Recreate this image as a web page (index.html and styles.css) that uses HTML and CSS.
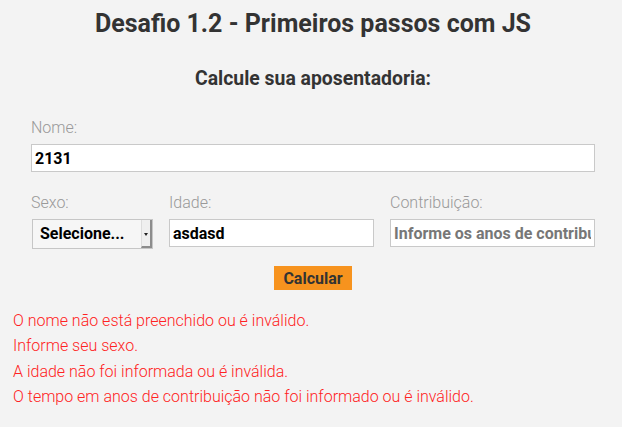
FILE: index.html
```html
<!DOCTYPE html>
<html lang="pt-BR">
<head>
<meta charset="utf-8">
<title>Desafio 1.2</title>
<link rel="stylesheet" href="styles.css">
</head>
<body>
<div class="page">
  <h1 class="title">Desafio 1.2 - Primeiros passos com JS</h1>
  <h2 class="subtitle">Calcule sua aposentadoria:</h2>
  <form class="form">
    <div class="field">
      <label class="label">Nome:</label>
      <input class="input" type="text" value="2131">
    </div>
    <div class="row">
      <div class="field">
        <label class="label">Sexo:</label>
        <div class="select">
          <span class="select-text">Selecione...</span>
          <span class="select-btn"><span class="arrow"></span></span>
        </div>
      </div>
      <div class="field">
        <label class="label">Idade:</label>
        <input class="input" type="text" value="asdasd">
      </div>
      <div class="field">
        <label class="label">Contribuição:</label>
        <input class="input" type="text" placeholder="Informe os anos de contribuição">
      </div>
    </div>
    <div class="actions">
      <button class="btn" type="button">Calcular</button>
    </div>
  </form>
  <div class="errors">
    <p class="error">O nome não está preenchido ou é inválido.</p>
    <p class="error">Informe seu sexo.</p>
    <p class="error">A idade não foi informada ou é inválida.</p>
    <p class="error">O tempo em anos de contribuição não foi informado ou é inválido.</p>
  </div>
</div>
</body>
</html>
```

FILE: styles.css
```css
html, body {
  margin: 0;
  padding: 0;
  background: #f3f3f3;
}
body {
  font-family: Roboto, "Liberation Sans", sans-serif;
  color: #333;
}
.page {
  padding: 9px 9px 0 13px;
}
.title {
  margin: 0;
  font-size: 25px;
  line-height: 29px;
  font-weight: 700;
  text-align: center;
  color: #333;
}
.subtitle {
  margin: 29px 0 0;
  font-size: 19.4px;
  line-height: 23px;
  font-weight: 700;
  text-align: center;
  color: #333;
}
.form {
  padding: 0 18px;
  margin-top: 28px;
}
.field {
  display: flex;
  flex-direction: column;
}
.label {
  font-size: 16px;
  line-height: 19px;
  font-weight: 300;
  color: #999;
  margin-bottom: 7px;
}
.input {
  box-sizing: border-box;
  height: 28px;
  width: 100%;
  margin: 0;
  padding: 1px 3px;
  border: 1px solid #c9c9c9;
  background: #fff;
  font-family: Roboto, "Liberation Sans", sans-serif;
  font-size: 16px;
  font-weight: 700;
  color: #000;
  outline: none;
}
.input::placeholder {
  color: #777;
  opacity: 1;
}
.row {
  display: grid;
  grid-template-columns: 122px 1fr 1fr;
  column-gap: 16px;
  margin-top: 21px;
}
.select {
  box-sizing: border-box;
  height: 30px;
  display: flex;
  border: 1px solid #c6c6c6;
  background: #f6f6f6;
  margin-left: 1px;
}
.select-text {
  flex: 1;
  padding-left: 7px;
  font-size: 16px;
  font-weight: 700;
  color: #000;
  line-height: 28px;
}
.select-btn {
  box-sizing: border-box;
  width: 11px;
  display: flex;
  align-items: center;
  justify-content: center;
  border-left: 1px solid #dcdcdc;
  border-right: 2px solid #8c8c8c;
  border-bottom: 2px solid #8c8c8c;
  background: #efefef;
  padding-top: 2px;
}
.arrow {
  width: 0;
  height: 0;
  border-left: 2px solid transparent;
  border-right: 2px solid transparent;
  border-top: 3px solid #222;
}
.actions {
  display: flex;
  justify-content: center;
  margin-top: 17px;
}
.btn {
  height: 24px;
  width: 78px;
  padding: 0;
  border: none;
  background: #f7931e;
  font-family: Roboto, "Liberation Sans", sans-serif;
  font-size: 16px;
  font-weight: 700;
  color: #333;
}
.errors {
  margin-top: 18px;
}
.error {
  margin: 0;
  font-size: 16px;
  line-height: 25.3px;
  font-weight: 300;
  color: #ff2222;
}
```
